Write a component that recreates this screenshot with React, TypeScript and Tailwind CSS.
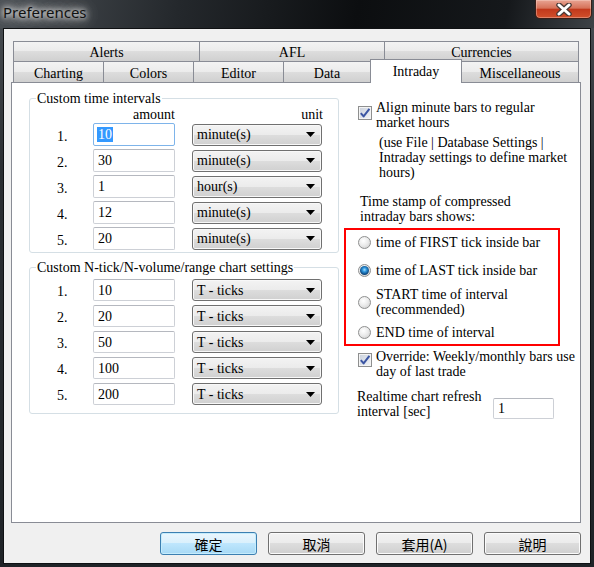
import React from "react";

const grad =
  "bg-[linear-gradient(to_bottom,#f3f3f3_0%,#ebebeb_50%,#dddddd_50%,#d0d0d0_100%)]";

function CheckBox() {
  return (
    <span className="shrink-0 w-[14px] h-[14px] border border-[#8e8f8f] bg-[linear-gradient(135deg,#c9d0dc_0%,#f2f4f7_100%)] shadow-[inset_0_0_0_1px_#f4f4f4] flex items-center justify-center">
      <svg width="12" height="12" viewBox="0 0 12 12">
        <path
          d="M1.8 6.2 L4.6 9.4 L10.4 1.8"
          fill="none"
          stroke="#3b55a3"
          strokeWidth="2"
          strokeLinejoin="round"
        />
      </svg>
    </span>
  );
}

function Radio({ checked = false }: { checked?: boolean }) {
  return (
    <span className="shrink-0 w-[13px] h-[13px] rounded-full border border-[#8e8f8f] bg-[radial-gradient(circle_at_40%_35%,#ffffff_0%,#ececec_45%,#c9c9c9_100%)] flex items-center justify-center">
      {checked && (
        <span className="w-[9px] h-[9px] rounded-full bg-[radial-gradient(circle_at_50%_42%,#a6e0ff_0%,#2d94dc_30%,#0e4a82_65%,#08243f_100%)]" />
      )}
    </span>
  );
}

function TextBox({
  value,
  h,
  focused = false,
}: {
  value: string;
  h: string;
  focused?: boolean;
}) {
  return (
    <div
      className={
        focused
          ? "w-[82px] h-[23px] border border-[#7eb4ea] rounded-[2px] bg-white flex items-center pl-[3px]"
          : h === "22"
          ? "w-[82px] h-[22px] border border-[#cdd0d6] border-t-[#b5b8bf] rounded-[2px] bg-white flex items-center pl-[3px]"
          : "w-[82px] h-[23px] border border-[#cdd0d6] border-t-[#b5b8bf] rounded-[2px] bg-white flex items-center pl-[3px]"
      }
    >
      {focused ? (
        <span className="bg-[#3399ff] text-white px-[1px] leading-[15px]">{value}</span>
      ) : (
        <span className="px-[1px]">{value}</span>
      )}
    </div>
  );
}

function Combo({ value }: { value: string }) {
  return (
    <div
      className={
        "ml-[17px] w-[130px] h-[22px] border border-[#707070] rounded-[3px] shadow-[inset_0_0_0_1px_#f8f8f8] flex items-center justify-between pl-[4px] pr-[6px] " +
        grad
      }
    >
      <span>{value}</span>
      <svg width="9" height="5" viewBox="0 0 9 5">
        <path d="M0 0H9L4.5 5Z" fill="#000" />
      </svg>
    </div>
  );
}

const timeRows = [
  { n: "1.", v: "10", u: "minute(s)" },
  { n: "2.", v: "30", u: "minute(s)" },
  { n: "3.", v: "1", u: "hour(s)" },
  { n: "4.", v: "12", u: "minute(s)" },
  { n: "5.", v: "20", u: "minute(s)" },
];

const tickRows = [
  { n: "1.", v: "10" },
  { n: "2.", v: "20" },
  { n: "3.", v: "50" },
  { n: "4.", v: "100" },
  { n: "5.", v: "200" },
];

function Button({ label, def = false }: { label: string; def?: boolean }) {
  return (
    <div
      className={
        def
          ? "w-[97px] h-[23px] rounded-[3px] border border-[#3c7fb1] bg-[linear-gradient(to_bottom,#eaf6fd_0%,#d9f0fc_50%,#bee6fd_50%,#a7d9f5_100%)] shadow-[inset_0_0_0_1px_#c5ecfc] flex items-center justify-center"
          : "w-[97px] h-[23px] rounded-[3px] border border-[#707070] bg-[linear-gradient(to_bottom,#f2f2f2_0%,#ebebeb_50%,#dddddd_50%,#cfcfcf_100%)] shadow-[inset_0_0_0_1px_#fbfbfb] flex items-center justify-center"
      }
    >
      <span className="font-['Noto_Sans_CJK_TC','Noto_Sans',sans-serif] text-[14px] leading-[18px]">
        {label}
      </span>
    </div>
  );
}

export default function App() {
  return (
    <div className="w-[594px] h-[567px] flex flex-col overflow-hidden bg-[linear-gradient(to_bottom,#4a4f54_0%,#2a2e32_30%,#1f2327_100%)] font-['Liberation_Serif',serif] text-[14px] leading-[15px] text-black">
      {/* title bar */}
      <div className="h-[28px] shrink-0 flex items-start justify-between bg-[linear-gradient(100deg,#4a4f54_0%,#24282c_30%,#0c0e10_60%,#15181b_85%,#3e4347_100%)]">
        <span className="ml-[3px] mt-[3px] font-['Noto_Sans',sans-serif] text-[15px] leading-[18px] text-[#111] [text-shadow:0_0_5px_#ffffff,0_0_9px_#e6e6e6,0_0_14px_#bdbdbd,0_0_18px_#9a9a9a]">
          Preferences
        </span>
        <div className="w-[57px] h-[19px] mr-[2px] rounded-b-[5px] border border-t-0 border-[#3a1e18] bg-[linear-gradient(to_bottom,#e8a493_0%,#d67259_45%,#c2391c_52%,#d2502b_100%)] shadow-[inset_0_0_0_1px_rgba(255,230,220,0.35)] flex items-center justify-center">
          <svg width="18" height="13" viewBox="0 0 18 13">
            <path
              d="M4 2 L14 11 M14 2 L4 11"
              stroke="#4a3a36"
              strokeWidth="5.5"
              strokeLinecap="round"
            />
            <path
              d="M4 2 L14 11 M14 2 L4 11"
              stroke="#ffffff"
              strokeWidth="3"
              strokeLinecap="round"
            />
          </svg>
        </div>
      </div>

      {/* client area */}
      <div className="flex-1 mx-[3px] mb-[3px] border border-[#0f1113] bg-[#f0f0f0] flex flex-col pl-[7px] pr-[9px] pt-[12px]">
        {/* tab strip */}
        <div className="flex flex-col">
          <div className="flex px-[2px]">
            <div className={"w-[186px] h-[20px] border-t border-l border-[#898c95] flex items-center justify-center pt-[1px] " + grad}>
              Alerts
            </div>
            <div className={"w-[185px] h-[20px] border-t border-l border-[#898c95] flex items-center justify-center pt-[1px] " + grad}>
              AFL
            </div>
            <div className={"w-[195px] h-[20px] border-t border-l border-r border-[#898c95] flex items-center justify-center pt-[1px] " + grad}>
              Currencies
            </div>
          </div>
          <div className="flex px-[2px]">
            <div className={"w-[90px] h-[21px] border-t border-l border-[#898c95] flex items-center justify-center pt-[2px] " + grad}>
              Charting
            </div>
            <div className={"w-[90px] h-[21px] border-t border-l border-[#898c95] flex items-center justify-center pt-[2px] " + grad}>
              Colors
            </div>
            <div className={"w-[90px] h-[21px] border-t border-l border-[#898c95] flex items-center justify-center pt-[2px] " + grad}>
              Editor
            </div>
            <div className={"w-[87px] h-[21px] border-t border-l border-[#898c95] flex items-center justify-center pt-[2px] " + grad}>
              Data
            </div>
            <div className="relative z-10 w-[92px] h-[24px] -mt-[2px] -mb-[1px] border-t border-l border-r border-[#898c95] bg-white flex items-center justify-center pb-[1px]">
              Intraday
            </div>
            <div className={"w-[117px] h-[21px] border-t border-r border-[#898c95] flex items-center justify-center pt-[2px] " + grad}>
              Miscellaneous
            </div>
          </div>
        </div>

        {/* panel */}
        <div className="h-[441px] border border-[#898c95] bg-white flex">
          {/* left column */}
          <div className="w-[327px] shrink-0 pl-[17px] pt-[8px] flex flex-col">
            <fieldset className="w-[310px] border border-[#d5dfe5] rounded-[3px] pb-[2px]">
              <legend className="ml-[6px] px-[1px] leading-[15px]">Custom time intervals</legend>
              <div className="flex h-[15px] mt-[1px]">
                <span className="w-[145px] text-right">amount</span>
                <span className="w-[148px] text-right">unit</span>
              </div>
              <div className="flex flex-col gap-[3px] mt-[1px]">
                {timeRows.map((r, i) => (
                  <div key={r.n} className="flex items-center h-[23px]">
                    <span className="w-[63px] pl-[27px] pt-[4px]">{r.n}</span>
                    <TextBox value={r.v} h="23" focused={i === 0} />
                    <Combo value={r.u} />
                  </div>
                ))}
              </div>
            </fieldset>

            <fieldset className="mt-[7px] w-[310px] border border-[#d5dfe5] rounded-[3px] pb-[8px]">
              <legend className="ml-[6px] px-[1px] leading-[15px]">
                Custom N-tick/N-volume/range chart settings
              </legend>
              <div className="flex flex-col gap-[4px] pt-[4px]">
                {tickRows.map((r) => (
                  <div key={r.n} className="flex items-center h-[22px]">
                    <span className="w-[63px] pl-[27px] pt-[2px]">{r.n}</span>
                    <TextBox value={r.v} h="22" />
                    <Combo value="T - ticks" />
                  </div>
                ))}
              </div>
            </fieldset>
          </div>

          {/* right column */}
          <div className="flex-1 ml-[5px] pt-[17px] flex flex-col whitespace-nowrap">
            <div className="flex items-start pl-[14px]">
              <span className="mt-[6px]">
                <CheckBox />
              </span>
              <span className="ml-[4px]">
                Align minute bars to regular
                <br />
                market hours
              </span>
            </div>
            <div className="pl-[35px] mt-[5px]">
              (use File | Database Settings |
              <br />
              Intraday settings to define market
              <br />
              hours)
            </div>
            <div className="pl-[16px] mt-[14px]">
              Time stamp of compressed
              <br />
              intraday bars shows:
            </div>

            <div className="mt-[4px] w-[216px] border-2 border-[#ff0000] pl-[12px] pt-[5px] pb-[4px] flex flex-col">
              <div className="flex items-center h-[15px] gap-[5px]">
                <Radio />
                <span>time of FIRST tick inside bar</span>
              </div>
              <div className="flex items-center h-[15px] gap-[5px] mt-[13px]">
                <Radio checked />
                <span>time of LAST tick inside bar</span>
              </div>
              <div className="flex items-center gap-[5px] mt-[9px]">
                <Radio />
                <span>
                  START time of interval
                  <br />
                  (recommended)
                </span>
              </div>
              <div className="flex items-center h-[15px] gap-[5px] mt-[8px]">
                <Radio />
                <span>END time of interval</span>
              </div>
            </div>

            <div className="flex items-start pl-[14px] mt-[3px]">
              <span className="mt-[4px]">
                <CheckBox />
              </span>
              <span className="ml-[4px]">
                Override: Weekly/monthly bars use
                <br />
                day of last trade
              </span>
            </div>

            <div className="flex items-start pl-[13px] mt-[10px]">
              <span className="w-[136px]">
                Realtime chart refresh
                <br />
                interval [sec]
              </span>
              <div className="mt-[9px] w-[61px] h-[21px] border border-[#cdd0d6] border-t-[#b5b8bf] rounded-[2px] bg-white flex items-center pl-[4px]">
                1
              </div>
            </div>
          </div>
        </div>

        {/* buttons */}
        <div className="flex justify-end gap-[11px] mt-[9px]">
          <Button label="確定" def />
          <Button label="取消" />
          <Button label="套用(A)" />
          <Button label="說明" />
        </div>
      </div>
    </div>
  );
}
